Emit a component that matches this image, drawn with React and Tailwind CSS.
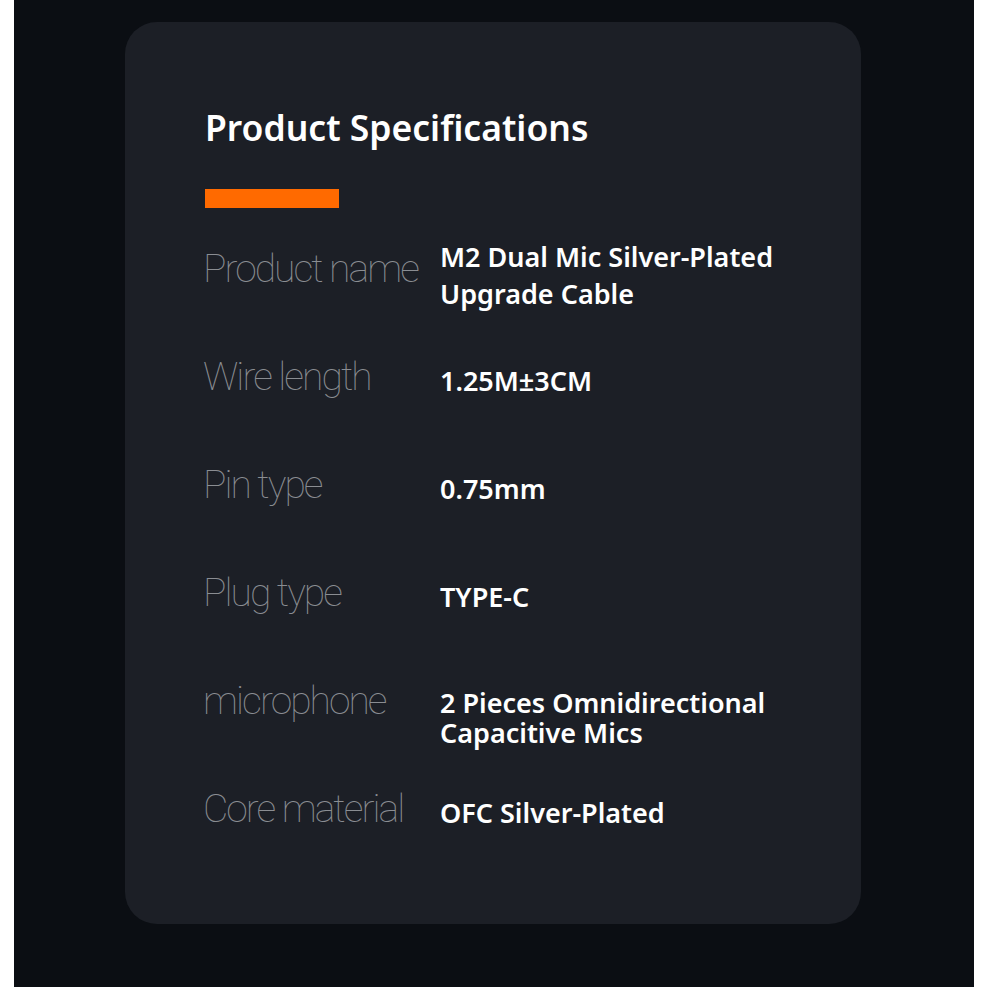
const specs = [
  { label: "Product name", value: ["M2 Dual Mic Silver-Plated", "Upgrade Cable"], cls: "-mt-[12px] leading-[37px]" },
  { label: "Wire length", value: ["1.25M±3CM"], cls: "mt-[4px] leading-[37px]" },
  { label: "Pin type", value: ["0.75mm"], cls: "mt-[4px] leading-[37px]" },
  { label: "Plug type", value: ["TYPE-C"], cls: "mt-[4px] leading-[37px]" },
  { label: "microphone", value: ["2 Pieces Omnidirectional", "Capacitive Mics"], cls: "mt-[6px] leading-[30px]" },
  { label: "Core material", value: ["OFC Silver-Plated"], cls: "mt-[4px] leading-[37px]" },
];

export default function App() {
  return (
    <div className="w-[987px] h-[987px] bg-white overflow-hidden">
      <div className="ml-[14px] w-[960px] h-[987px] bg-[#0b0e13] pt-[22px]">
        <div className="ml-[111px] w-[736px] h-[902px] rounded-[32px] bg-[#1c1f26] pl-[80px] pt-[112px]">
          <h2 className="font-['Noto_Sans',sans-serif] font-semibold text-[35.5px] leading-none text-white -mt-[24px]">
            Product Specifications
          </h2>
          <div className="mt-[43px] w-[134px] h-[19px] bg-[#ff6a00]" />

          <div className="mt-[42px] flex flex-col">
            {specs.map((row) => (
              <div key={row.label} className="flex items-start h-[108px]">
                <div className="w-[235px] shrink-0 -ml-[2px] mr-[2px] font-['Roboto',sans-serif] font-thin text-[39px] leading-none tracking-[-0.05em] text-[#8a8d92]">
                  {row.label}
                </div>
                <div className={`font-['Noto_Sans',sans-serif] font-semibold text-[27px] text-white ${row.cls}`}>
                  {row.value.map((line) => (
                    <div key={line}>{line}</div>
                  ))}
                </div>
              </div>
            ))}
          </div>
        </div>
      </div>
    </div>
  );
}
